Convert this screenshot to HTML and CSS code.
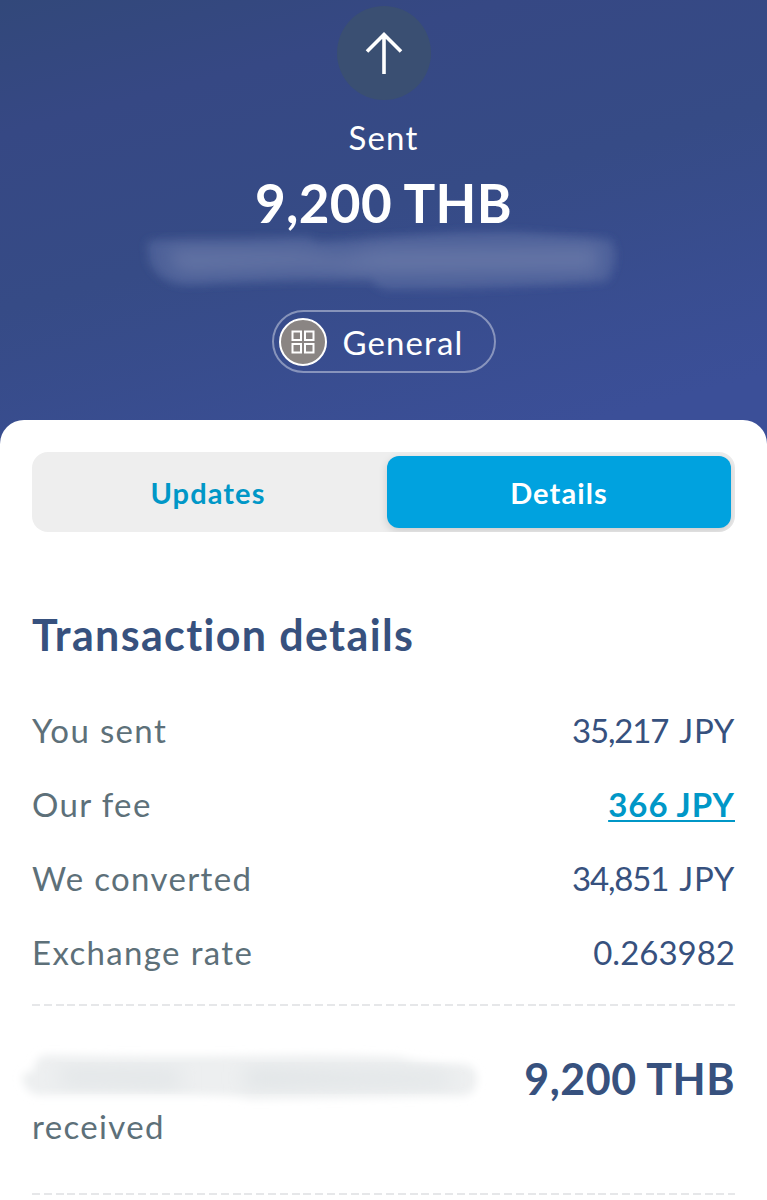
FILE: index.html
```
<!DOCTYPE html>
<html lang="en">
<head>
  <meta charset="UTF-8"/>
  <meta name="viewport" content="width=device-width,initial-scale=1"/>
  <title>Transaction details</title>
  <link rel="stylesheet" href="styles.css">
</head>
<body>

  <!-- Summary -->
  <header class="hero">
    <div class="direction">
      <svg width="40" height="44" viewBox="0 0 40 44" fill="none" stroke="#fff" stroke-width="3.6">
        <path d="M20 43V4M3 20.5L20 3.5L37 20.5"/>
      </svg>
    </div>
    <div class="status">Sent</div>
    <div class="amount">9,200 THB</div>

    <!-- Hidden recipient -->
    <svg class="hidden-name" width="490" height="60" viewBox="140 232 490 60" aria-hidden="true">
      <defs>
        <filter id="soft" x="-10%" y="-30%" width="120%" height="160%"><feGaussianBlur stdDeviation="4"/></filter>
        <filter id="softer" x="-20%" y="-50%" width="140%" height="200%"><feGaussianBlur stdDeviation="10"/></filter>
      </defs>
      <path filter="url(#soft)" fill="#53659c" fill-opacity=".75" d="M148 243Q152 239 170 240Q250 240 304 237Q314 238 318 242Q370 239 420 235Q470 231 520 232Q570 236 612 240Q622 258 608 281Q500 290 390 290Q376 288 372 279Q280 280 190 285Q160 284 150 262Z"/>
      <path filter="url(#softer)" fill="#7582ae" fill-opacity=".65" d="M165 250L300 250L340 256L380 248L600 246L600 272L390 274L300 268L180 272Z"/>
    </svg>

    <div class="category">
      <span class="category-icon">
        <svg width="24" height="24" viewBox="0 0 24 24" fill="none" stroke="#fff" stroke-width="2">
          <rect x="1.5" y="1.5" width="8.5" height="8.5"/>
          <rect x="14" y="1.5" width="8.5" height="8.5"/>
          <rect x="1.5" y="14" width="8.5" height="8.5"/>
          <rect x="14" y="14" width="8.5" height="8.5"/>
        </svg>
      </span>
      <span class="category-name">General</span>
    </div>
  </header>

  <main class="sheet">
    <nav class="tabs">
      <a class="tab">Updates</a>
      <a class="tab active">Details</a>
    </nav>

    <h1 class="title">Transaction details</h1>

    <dl class="rows">
      <div class="row"><dt>You sent</dt><dd class="money">35,217 <span class="currency">JPY</span></dd></div>
      <div class="row"><dt>Our fee</dt><dd><a class="fee">366 JPY</a></dd></div>
      <div class="row"><dt>We converted</dt><dd class="money">34,851 <span class="currency">JPY</span></dd></div>
      <div class="row"><dt>Exchange rate</dt><dd>0.263982</dd></div>
    </dl>

    <div class="divider"></div>

    <div class="received">
      <div class="received-by">
        <svg class="hidden-name" width="448" height="48" viewBox="32 1054 448 48" aria-hidden="true">
          <path filter="url(#soft)" fill="#edeff0" d="M22 1076Q26 1072 34 1071Q34 1057 46 1055Q150 1057 240 1056Q330 1054 400 1057Q418 1063 466 1064Q480 1070 476 1084Q475 1094 462 1096Q340 1098 250 1099Q238 1095 200 1095L38 1095Q24 1092 22 1076Z"/>
          <path filter="url(#softer)" fill="#d9dfe1" fill-opacity=".8" d="M60 1070L180 1072L180 1085L60 1082ZM245 1070L450 1074L450 1084L245 1086Z"/>
        </svg>
        <span>received</span>
      </div>
      <div class="received-amount">9,200 THB</div>
    </div>

    <div class="divider"></div>
  </main>

</body>
</html>
```

FILE: styles.css
```
:root {
  --navy: #37517e;
  --grey: #5d7079;
  --blue: #0097c7;
  --font-family: Lato, "Open Sans", sans-serif;
}
* { margin:0; padding:0; box-sizing:border-box }
body {
  min-height:1200px;
  overflow:hidden;
  font-family: var(--font-family);
  font-size:33px;
  background: linear-gradient(165deg, #32487a 0, #364884 130px, #364b86 300px, #3b4f98 560px);
}

/* Summary */
.hero {
  height:420px;
  padding-top:6px;
  display:flex; flex-direction:column; align-items:center;
  color:#fff;
}
.direction {
  width:94px; height:94px;
  border-radius:50%;
  background:#3a4f72;
  display:flex; align-items:center; justify-content:center;
}
.status {
  margin-top:17px;
  line-height:40px;
  letter-spacing:1.2px;
}
.amount {
  margin-top:16px;
  margin-bottom:-1px;
  font-size:53px;
  font-weight:700;
  line-height:60px;
  letter-spacing:0.3px;
}
.hidden-name { display:block; overflow:visible }
.category {
  width:224px; height:63px;
  margin-top:18px;
  padding-left:5px;
  border:2px solid rgba(255,255,255,0.4);
  border-radius:32px;
  display:flex; align-items:center; gap:16px;
}
.category-icon {
  width:48px; height:48px;
  border:2px solid #fff;
  border-radius:50%;
  background:#8a8583;
  display:flex; align-items:center; justify-content:center;
}
.category-name { letter-spacing:1.1px }

/* Sheet */
.sheet {
  height:780px;
  padding:32px 32px 0;
  border-radius:24px 24px 0 0;
  background:#fff;
}
.tabs {
  height:80px;
  padding:4px;
  border-radius:16px;
  background:#eee;
  display:flex;
  overflow:hidden;
}
.tab {
  flex:1;
  padding-right:7px;
  border-radius:12px;
  display:flex; align-items:center; justify-content:center;
  font-size:29px;
  font-weight:700;
  letter-spacing:1.1px;
  color: var(--blue);
}
.tab.active {
  flex:0 0 344px;
  padding-right:0;
  background:#00a2df;
  color:#fff;
  box-shadow:0 3px 8px rgba(0,0,0,0.15);
}
.title {
  margin-top:77px;
  font-size:43px;
  font-weight:700;
  line-height:52px;
  letter-spacing:1.35px;
  color: var(--navy);
}

/* Rows */
.rows { margin-top:32px }
.row {
  height:74px;
  display:flex; align-items:center; justify-content:space-between;
}
.row dt, .received-by { color: var(--grey); letter-spacing:1.35px }
.row dd { color: var(--navy) }
.row .money { letter-spacing:-1.2px; word-spacing:4px }
.currency { letter-spacing:0.6px }
.fee {
  font-weight:700;
  letter-spacing:1px;
  color: var(--blue);
  text-decoration:underline;
  text-decoration-thickness:2px;
  text-underline-offset:3px;
}
.divider {
  height:2px;
  margin-top:15px;
  background: repeating-linear-gradient(90deg, #e6e7e9 0 8px, transparent 8px 11.8px);
}

/* Received */
.received {
  margin-top:48px;
  display:flex; justify-content:space-between;
  line-height:48px;
}
.received-amount {
  padding-top:1px;
  font-size:43px;
  font-weight:700;
  letter-spacing:0.5px;
  color: var(--navy);
}
.received + .divider { margin-top:43px }
```
